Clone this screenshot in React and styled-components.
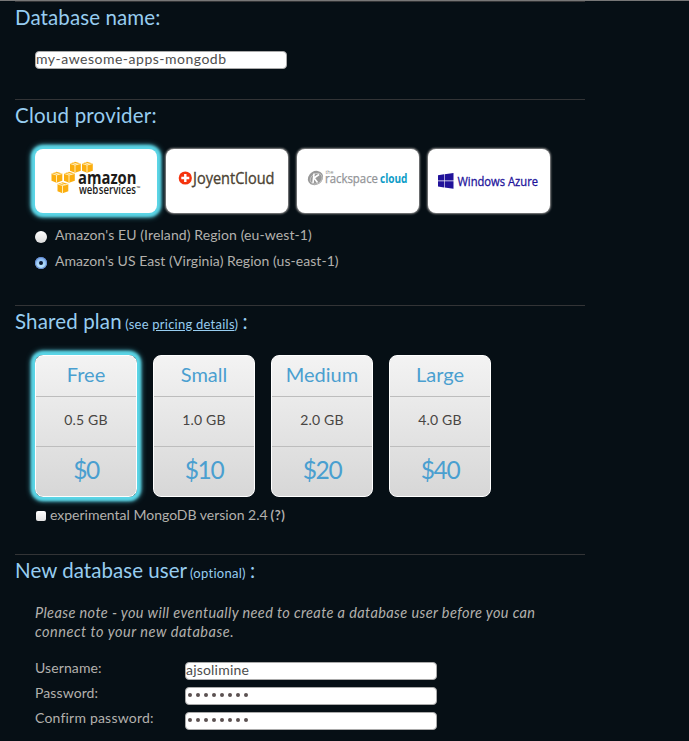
import React from "react";
import styled, { createGlobalStyle, css } from "styled-components";

const GlobalStyle = createGlobalStyle`
  * { box-sizing: border-box; }
  body {
    margin: 0;
    background: #060f15;
    color: #b3b1ad;
    font-family: Lato, "Liberation Sans", sans-serif;
    font-size: 14px;
  }
`;

const Page = styled.main`
  height: 741px;
  padding-left: 15px;
  border-top: 1px solid #777;
  overflow: hidden;
`;

const Section = styled.section`
  width: 570px;
  height: ${(p) => p.$height}px;
  border-top: 1px solid #333436;
`;

const Heading = styled.h2`
  margin: 0;
  height: 31px;
  line-height: 30px;
  font-size: 20.5px;
  font-weight: 400;
  color: #97cdf0;
  white-space: nowrap;
  letter-spacing: ${(p) => p.$spacing || 0}px;
`;

const Aside = styled.small`
  margin: 0 -1px 0 -2px;
  font-size: 13px;
  letter-spacing: ${(p) => p.$spacing || 0}px;
`;

const Link = styled.a`
  color: inherit;
  text-decoration: underline;
`;

const Body = styled.div`
  padding: ${(p) => p.$top}px 0 0 20px;
`;

const Copy = styled.span`
  display: block;
  white-space: nowrap;
  letter-spacing: ${(p) => p.$spacing || 0}px;
`;

const Field = styled.input`
  display: block;
  width: 252px;
  height: 18px;
  padding: 0 0 3px;
  border: 1px solid #aaa;
  border-radius: 4px;
  background: #fff;
  color: #4d4d4d;
  font: 14px/13px Lato, "Liberation Sans", sans-serif;
  letter-spacing: ${(p) => p.$spacing || 0}px;
  outline: none;
`;

const Mask = styled.div`
  display: flex;
  align-items: flex-start;
  gap: 4px;
  width: 252px;
  height: 18px;
  padding: 5px 0 0 2px;
  border: 1px solid #aaa;
  border-radius: 4px;
  background: #fff;
`;

const Dot = styled.i`
  width: 4px;
  height: 4px;
  border-radius: 50%;
  background: #5b5151;
`;

const glow = css`
  box-shadow: 0 0 3px 4px #5bd5e6, 0 0 6px 3px #5bd5e6;
`;

const Providers = styled.div`
  display: flex;
  gap: 9px;
`;

const Provider = styled.button`
  width: 122px;
  height: 64px;
  padding: 0;
  border: 0;
  border-radius: 8px;
  background: #fff;
  box-shadow: 0 0 2px 0.5px #8f8f8f;
  ${(p) => p.$selected && glow}
`;

const Logo = styled.svg`
  display: block;
  width: 122px;
  height: 64px;
`;

const Regions = styled.div`
  display: grid;
  grid-auto-rows: 26px;
  padding-top: 10px;
`;

const Region = styled.label`
  display: flex;
  align-items: center;
  gap: 8px;
  padding-bottom: 3px;
`;

const Radio = styled.span`
  display: grid;
  place-items: center;
  width: 12px;
  height: 12px;
  margin-top: 4px;
  border-radius: 50%;
  background: ${(p) => (p.$checked ? "linear-gradient(#7fb0ee, #c9f2ff)" : "linear-gradient(#ffffff, #dcdcdc)")};
  box-shadow: ${(p) => (p.$checked ? "inset 0 0 1px 1px #5f86d2" : "none")};
  &::after {
    content: "";
    width: 4px;
    height: 4px;
    border-radius: 50%;
    background: ${(p) => (p.$checked ? "#0a1730" : "transparent")};
  }
`;

const Plans = styled.div`
  display: flex;
  gap: 16px;
`;

const Plan = styled.div`
  display: grid;
  grid-template-rows: 40px 50px 1fr;
  width: 102px;
  height: 142px;
  border: 1px solid #fff;
  border-radius: 8px;
  background: linear-gradient(#f3f3f3, #d7d7d7);
  text-align: center;
  ${(p) => p.$selected && glow}
`;

const PlanCell = styled.div`
  display: grid;
  place-items: center;
  padding-bottom: ${(p) => p.$lift || 0}px;
  font-size: ${(p) => p.$size}px;
  color: ${(p) => p.$color};
  letter-spacing: ${(p) => p.$spacing || 0}px;
  & + & { border-top: 1px solid #bdbdbd; }
`;

const Experimental = styled.label`
  display: flex;
  align-items: center;
  gap: 4px;
  height: 20px;
  margin-top: 7px;
`;

const Box = styled.span`
  width: 10px;
  height: 10px;
  margin: 3px 0 0 1px;
  border-radius: 2px;
  background: linear-gradient(#fff, #e2e2e2);
`;

const Help = styled.span`
  font-size: 13px;
  font-weight: 700;
  margin: 1px 0 0 -1px;
  letter-spacing: 0.5px;
`;

const Note = styled.p`
  margin: 0 0 21px;
  font-style: italic;
  font-size: 14.5px;
  line-height: 19px;
`;

const Form = styled.div`
  display: grid;
  grid-template-columns: 150px 252px;
  grid-auto-rows: 18px;
  row-gap: 7px;
`;

const FormLabel = styled.label`
  line-height: 12px;
  white-space: nowrap;
  letter-spacing: ${(p) => p.$spacing || 0}px;
`;

function Cube({ x, y }) {
  return (
    <g transform={`translate(${x} ${y})`}>
      <path d="M0 2 5 .2 10.8 2V9.2L5 11.2 0 9.2Z" fill="#fbae0f" />
      <path d="M0 2 5 3.5 10.8 2M5 3.5V11M2.8 1.2 7.8 2.8" stroke="#fff3c9" strokeWidth=".9" fill="none" />
    </g>
  );
}

function AmazonLogo() {
  return (
    <Logo viewBox="0 0 122 64">
      <Cube x={35} y={12.5} /><Cube x={47} y={12.5} />
      <Cube x={16.5} y={22.5} /><Cube x={29} y={22.5} />
      <Cube x={22.5} y={33} />
      <text x="43" y="35" textLength="58.5" lengthAdjust="spacingAndGlyphs" fontFamily="Open Sans" fontWeight="700" fontSize="17" fill="#1c1a18">amazon</text>
      <text x="44" y="45" textLength="57" lengthAdjust="spacingAndGlyphs" fontFamily="Open Sans" fontWeight="600" fontSize="12" fill="#1c1a18">web<tspan dx="-2.5"> services</tspan></text>
      <text x="101.5" y="41" fontFamily="Open Sans" fontSize="5" fill="#1c1a18">™</text>
    </Logo>
  );
}

function JoyentLogo() {
  return (
    <Logo viewBox="0 0 122 64">
      <circle cx="19.3" cy="29" r="6.6" fill="#f5330e" />
      <path d="M19.3 25v8M15.3 29h8" stroke="#fff" strokeWidth="2.4" />
      <text x="27" y="35" textLength="81.5" lengthAdjust="spacingAndGlyphs" fontFamily="Open Sans" fontSize="16" fill="#4b4232" stroke="#4b4232" strokeWidth=".35">JoyentCloud</text>
    </Logo>
  );
}

function RackspaceLogo() {
  return (
    <Logo viewBox="0 0 122 64">
      <g transform="rotate(-32 18.5 29)">
        <ellipse cx="18.5" cy="29" rx="8" ry="6.8" fill="#999" />
        <ellipse cx="18.7" cy="30" rx="6.3" ry="5" fill="none" stroke="#ddd" strokeWidth=".6" />
      </g>
      <path d="M17 24.5 16 34M17 29l5-3.5M17.5 29.5l3 4" stroke="#fff" strokeWidth="1.6" fill="none" />
      <text x="28.5" y="25" textLength="8" lengthAdjust="spacingAndGlyphs" fontFamily="Open Sans" fontSize="6" fill="#888">the</text>
      <text x="28" y="33.5" textLength="53" lengthAdjust="spacingAndGlyphs" fontFamily="Open Sans" fontSize="12.5" fill="#929497" stroke="#929497" strokeWidth=".25">rackspace</text>
      <text x="83" y="33.5" textLength="27.5" lengthAdjust="spacingAndGlyphs" fontFamily="Open Sans" fontWeight="700" fontSize="11.5" fill="#0d9cc7">cloud</text>
    </Logo>
  );
}

function AzureLogo() {
  return (
    <Logo viewBox="0 0 122 64">
      <path d="M10 26.2 16 25.3V31.6H10ZM16.6 25.2 25.5 24V31.6H16.6ZM10 32.2H16V38.4L10 37.6ZM16.6 32.2H25.5V39.8L16.6 38.5Z" fill="#21129a" />
      <text x="29.5" y="36.5" textLength="80.5" lengthAdjust="spacingAndGlyphs" fontFamily="Open Sans" fontSize="12.5" fill="#21129a" stroke="#21129a" strokeWidth=".3">Windows Azure</text>
    </Logo>
  );
}

const plans = [
  { name: "Free", size: "0.5 GB", price: "$0" },
  { name: "Small", size: "1.0 GB", price: "$10" },
  { name: "Medium", size: "2.0 GB", price: "$20" },
  { name: "Large", size: "4.0 GB", price: "$40" },
];

function PasswordField() {
  return <Mask>{Array.from({ length: 8 }, (_, i) => <Dot key={i} />)}</Mask>;
}

export default function App() {
  return (
    <>
      <GlobalStyle />
      <Page>
        <Section $height={98}>
          <Heading $spacing={0.1}>Database name:</Heading>
          <Body $top={18}><Field $spacing={0.5} defaultValue="my-awesome-apps-mongodb" /></Body>
        </Section>
        <Section $height={206}>
          <Heading $spacing={0.22}>Cloud provider:</Heading>
          <Body $top={18}>
            <Providers>
              <Provider $selected><AmazonLogo /></Provider>
              <Provider><JoyentLogo /></Provider>
              <Provider><RackspaceLogo /></Provider>
              <Provider><AzureLogo /></Provider>
            </Providers>
            <Regions>
              <Region><Radio /><Copy $spacing={0.1}>Amazon's EU (Ireland) Region (eu-west-1)</Copy></Region>
              <Region><Radio $checked /><Copy $spacing={0.05}>Amazon's US East (Virginia) Region (us-east-1)</Copy></Region>
            </Regions>
          </Body>
        </Section>
        <Section $height={249}>
          <Heading $spacing={0.15}>Shared plan <Aside $spacing={0.24}>(see <Link>pricing details</Link>)</Aside> :</Heading>
          <Body $top={18}>
            <Plans>
              {plans.map((p, i) => (
                <Plan key={p.name} $selected={i === 0}>
                  <PlanCell $size={20} $color="#4a9fd0" $lift={5}>{p.name}</PlanCell>
                  <PlanCell $size={14} $color="#484543" $lift={4} $spacing={0.2}>{p.size}</PlanCell>
                  <PlanCell $size={24.5} $color="#4a9fd0" $lift={5} $spacing={-1.4}>{p.price}</PlanCell>
                </Plan>
              ))}
            </Plans>
            <Experimental>
              <Box /><Copy>experimental MongoDB version 2.4</Copy><Help>(?)</Help>
            </Experimental>
          </Body>
        </Section>
        <Section $height={187}>
          <Heading $spacing={0.05}>New database user <Aside $spacing={0.27}>(optional)</Aside> :</Heading>
          <Body $top={17}>
            <Note>
              <Copy $spacing={0.39}>Please note - you will eventually need to create a database user before you can</Copy>
              <Copy $spacing={0.53}>connect to your new database.</Copy>
            </Note>
            <Form>
              <FormLabel $spacing={0.1}>Username:</FormLabel><Field $spacing={0.2} defaultValue="ajsolimine" />
              <FormLabel $spacing={0.1}>Password:</FormLabel><PasswordField />
              <FormLabel $spacing={0.2}>Confirm password:</FormLabel><PasswordField />
            </Form>
          </Body>
        </Section>
      </Page>
    </>
  );
}
